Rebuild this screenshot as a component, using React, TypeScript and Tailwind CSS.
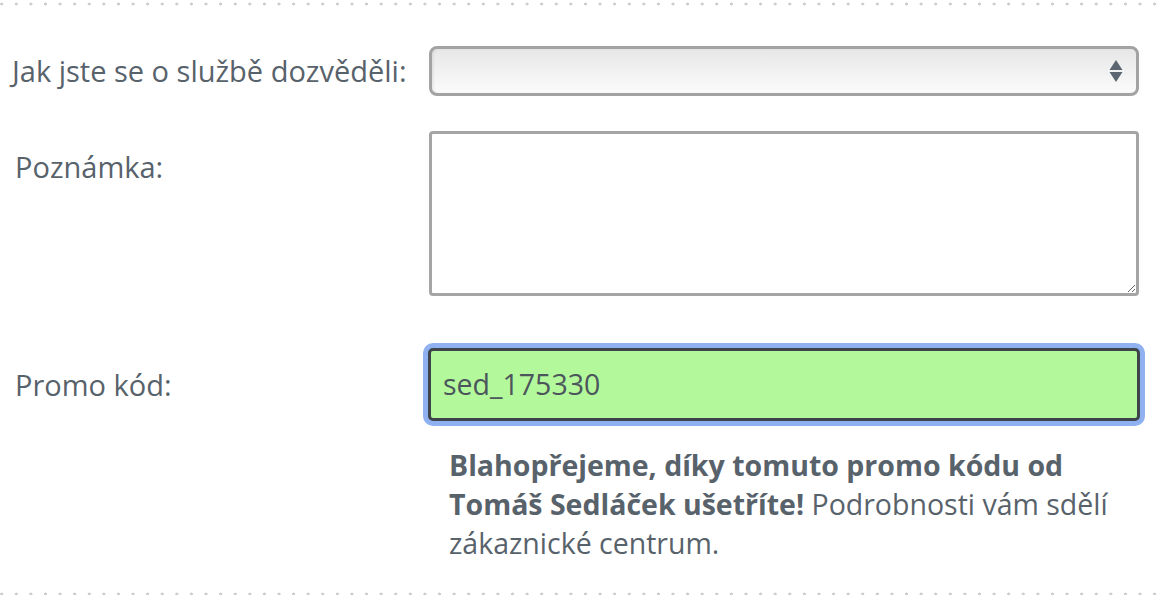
import React from "react";

const dots =
  "h-[6px] w-full shrink-0 bg-[radial-gradient(circle,#cccccc_1.4px,transparent_1.6px)] bg-[length:14.6px_6px] bg-[position:9px_0]";

export default function App() {
  return (
    <div
      className="w-[1164px] h-[595px] bg-white text-[#58626b] overflow-hidden flex flex-col"
      style={{ fontFamily: '"Open Sans", "Noto Sans", sans-serif' }}
    >
      <div className={`${dots} mt-[1px]`}></div>

      {/* source */}
      <div className="flex items-center mt-[39px]">
        <label className="w-[429px] pl-[12px] text-[29px] leading-[36px]">
          Jak jste se o službě dozvěděli:
        </label>
        <div className="relative w-[710px] h-[50px] rounded-[8px] border-[3px] border-[#a3a3a3] bg-gradient-to-b from-[#e7e7e7] to-[#fbfbfb] shadow-[inset_2px_0_2px_rgba(0,0,0,0.06)] flex items-center justify-end pr-[13px]">
          <svg width="14" height="24" viewBox="0 0 14 24">
            <path d="M7 1 L13.5 11 L0.5 11 Z" fill="#5c6670" />
            <path d="M0.5 13 L13.5 13 L7 23 Z" fill="#5c6670" />
          </svg>
        </div>
      </div>

      {/* note */}
      <div className="flex items-start mt-[35px]">
        <label className="w-[429px] pl-[15px] pt-[18px] text-[29px] leading-[36px]">
          Poznámka:
        </label>
        <textarea className="w-[710px] h-[165px] rounded-[4px] border-[3px] border-[#a5a5a5] bg-white outline-none resize"></textarea>
      </div>

      {/* promo */}
      <div className="flex items-center mt-[52px]">
        <label className="w-[429px] pl-[15px] text-[29px] leading-[36px]">
          Promo kód:
        </label>
        <div className="w-[712px] h-[73px] -ml-[1px] rounded-[5px] border-[3px] border-[#3e454a] bg-[#b3f99b] shadow-[0_0_0_5px_#8fb1ef] flex items-center px-[12px]">
          <input
            className="w-full bg-transparent outline-none text-[28.5px] text-[#4c555c]"
            style={{ fontFamily: '"Open Sans", "Noto Sans", sans-serif' }}
            defaultValue="sed_175330"
          />
        </div>
      </div>

      <p className="ml-[449px] w-[692px] mt-[25px] text-[28.5px] leading-[39px]">
        <strong className="font-bold">
          Blahopřejeme, díky tomuto promo kódu od Tomáš Sedláček ušetříte!
        </strong>{" "}
        Podrobnosti vám sdělí zákaznické centrum.
      </p>

      <div className={`${dots} mt-auto -mb-[2px]`}></div>
    </div>
  );
}
